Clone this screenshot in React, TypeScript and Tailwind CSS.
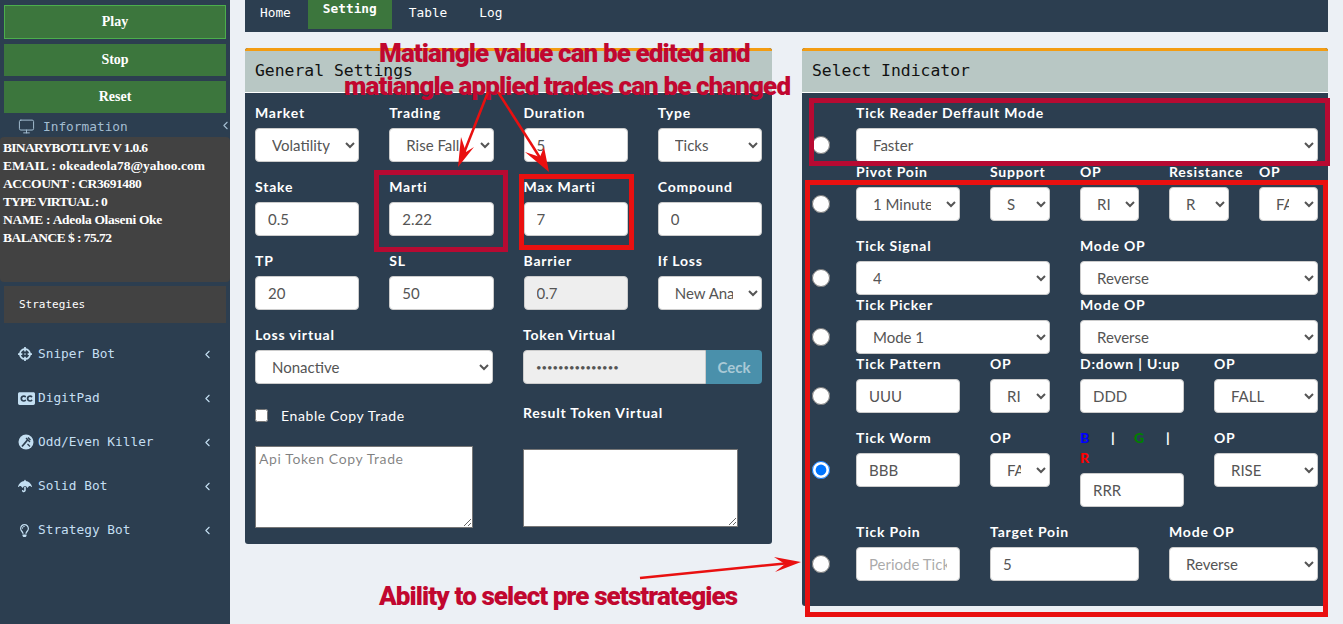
import { Monitor, ChevronLeft } from 'lucide-react'
import { FaCrosshairs, FaClosedCaptioning, FaUmbrella, FaRegLightbulb } from 'react-icons/fa'

const control = 'block w-full h-[34px] rounded-[4px] border border-[#ccc] px-[12px] text-[15px] text-[#555] font-["Lato",sans-serif]'
const label = 'block h-[23px] text-[14px] leading-[16px] font-bold text-white tracking-[0.8px] font-["Lato",sans-serif] whitespace-nowrap'

function Field({ title, children }: { title: string; children: React.ReactNode }) {
  return (
    <div>
      <label className={label}>{title}</label>
      {children}
    </div>
  )
}

function Sel({ value, options }: { value: string; options?: string[] }) {
  const opts = options ?? [value]
  return (
    <select className={`${control} bg-white`} defaultValue={value}>
      {opts.map(o => <option key={o}>{o}</option>)}
    </select>
  )
}

function Inp({ value, placeholder, disabled }: { value?: string; placeholder?: string; disabled?: boolean }) {
  return (
    <input
      className={`${control} ${disabled ? 'bg-[#eee]' : 'bg-white'}`}
      defaultValue={value}
      placeholder={placeholder}
      disabled={disabled}
    />
  )
}

function Row({ cols, gap, checked, children }: { cols: string; gap: string; checked?: boolean; children: React.ReactNode }) {
  return (
    <div className={`flex ${gap}`}>
      <div className="w-[44px] shrink-0 pt-[31px]">
        <input type="radio" name="indicator" defaultChecked={checked} className="block w-[18px] h-[18px] m-0 accent-[#0075ff]" />
      </div>
      <div className={`grid flex-1 gap-x-[30px] items-start ${cols}`}>{children}</div>
    </div>
  )
}

// round badge with a diagonal tool, no package has this one
function ToolBadge() {
  return (
    <svg width="16" height="16" viewBox="0 0 16 16">
      <circle cx="8" cy="8" r="7.5" fill="#c4dff2" />
      <path d="M4 12.5 L9.5 6" stroke="#2c3e50" strokeWidth="1.8" />
      <path d="M8 4 L12 8 M10 3.5 L12.5 6" stroke="#2c3e50" strokeWidth="1.4" />
      <path d="M9.5 10 L12 12.5" stroke="#2c3e50" strokeWidth="1.2" />
    </svg>
  )
}

const menu = [
  { name: 'Sniper Bot', icon: <FaCrosshairs size={14} /> },
  { name: 'DigitPad', icon: <FaClosedCaptioning size={17} /> },
  { name: 'Odd/Even Killer', icon: <ToolBadge /> },
  { name: 'Solid Bot', icon: <FaUmbrella size={14} /> },
  { name: 'Strategy Bot', icon: <FaRegLightbulb size={13} /> },
]

function Sidebar() {
  const btn = 'block w-full bg-[#3c763d] text-white font-bold text-[14px] text-center pb-[2px] font-["Liberation_Serif",serif]'
  return (
    <aside className="w-[230px] shrink-0 h-full bg-[#2c3e50] overflow-hidden">
      <div className="px-[4px] pt-[5px]">
        <button className={`${btn} h-[34px] border border-[#4cae4c]`}>Play</button>
        <button className={`${btn} h-[32px] mt-[5px]`}>Stop</button>
        <button className={`${btn} h-[32px] mt-[5px]`}>Reset</button>
      </div>
      <div className="relative h-[24px] flex items-center pt-[3px] pl-[18px] text-[#a3bdd0] font-['DejaVu_Sans_Mono',monospace] text-[12.8px]">
        <Monitor size={17} strokeWidth={1.4} className="mr-[8px]" />
        Information
        <ChevronLeft size={13} className="absolute right-[-2px] top-[6px]" />
      </div>
      <div className="h-[145px] rounded-[4px] bg-[#424242] pl-[3px] pt-[2px] text-white font-bold text-[13.5px] leading-[18px] font-['Liberation_Serif',serif]">
        <div className="tracking-[-0.7px]">BINARYBOT.LIVE V 1.0.6</div>
        <div>EMAIL : okeadeola78@yahoo.com</div>
        <div className="tracking-[-0.4px]">ACCOUNT : CR3691480</div>
        <div className="tracking-[-0.9px]">TYPE VIRTUAL : 0</div>
        <div className="tracking-[-0.3px]">NAME : Adeola Olaseni Oke</div>
        <div className="tracking-[-0.55px]">BALANCE $ : 75.72</div>
      </div>
      <div className="mx-[4px] mt-[4px] h-[37px] bg-[#424242] pl-[15px] pt-[1px] flex items-center text-white text-[11px] font-['DejaVu_Sans_Mono',monospace]">
        Strategies
      </div>
      <nav className="mt-[9px]">
        {menu.map(m => (
          <div key={m.name} className="h-[44px] flex items-center pl-[18px] pr-[16px] text-[#c4dff2] text-[12.8px] font-['DejaVu_Sans_Mono',monospace]">
            <span className="w-[20px] shrink-0 flex">{m.icon}</span>
            <span className="flex-1">{m.name}</span>
            <ChevronLeft size={13} />
          </div>
        ))}
      </nav>
    </aside>
  )
}

function PanelHead({ title }: { title: string }) {
  return (
    <div className="h-[45px] rounded-t-[3px] border-t-[3px] border-b border-t-[#f39c12] border-b-white bg-[#b8c7c4] pl-[10px] pt-[8px] text-[16.4px] text-[#111] font-['DejaVu_Sans_Mono',monospace]">
      {title}
    </div>
  )
}

function GeneralSettings() {
  return (
    <section className="w-[527px] h-[496px] rounded-[3px] bg-[#2c3e50]">
      <PanelHead title="General Settings" />
      <div className="px-[10px] pt-[12px]">
        <div className="grid grid-cols-4 gap-x-[30px] gap-y-[17px]">
          <Field title="Market"><Sel value="Volatility 100 Index" /></Field>
          <Field title="Trading"><Sel value="Rise Fall" /></Field>
          <Field title="Duration"><Inp value="5" /></Field>
          <Field title="Type"><Sel value="Ticks" /></Field>
          <Field title="Stake"><Inp value="0.5" /></Field>
          <Field title="Marti"><Inp value="2.22" /></Field>
          <Field title="Max Marti"><Inp value="7" /></Field>
          <Field title="Compound"><Inp value="0" /></Field>
          <Field title="TP"><Inp value="20" /></Field>
          <Field title="SL"><Inp value="50" /></Field>
          <Field title="Barrier"><Inp value="0.7" disabled /></Field>
          <Field title="If Loss"><Sel value="New Analysis" /></Field>
        </div>
        <div className="mt-[17px] grid grid-cols-[238px_239px] gap-x-[30px]">
          <Field title="Loss virtual"><Sel value="Nonactive" /></Field>
          <Field title="Token Virtual">
            <div className="flex">
              <input
                type="password"
                readOnly
                defaultValue="aaaaaaaaaaaaaaa"
                className="block flex-1 min-w-0 h-[34px] rounded-l-[4px] border border-[#ccc] bg-[#eee] px-[12px] text-[9.5px] text-[#555] font-['Lato',sans-serif]"
              />
              <button className="w-[56px] h-[34px] rounded-r-[4px] bg-[#4a90ab] text-[#a9c9d6] font-bold text-[15px] font-['Lato',sans-serif]">Ceck</button>
            </div>
          </Field>
        </div>
        <div className="mt-[17px] grid grid-cols-[238px_239px] gap-x-[30px]">
          <div>
            <div className="h-[28px] flex items-center">
              <input type="checkbox" className="block w-[13px] h-[13px] m-0" />
              <span className="ml-[13px] text-[14px] tracking-[0.6px] text-white font-['Lato',sans-serif]">Enable Copy Trade</span>
            </div>
            <textarea
              placeholder="Api Token Copy Trade"
              className="block mt-[17px] w-[218px] h-[82px] bg-white border border-[#767676] px-[3px] py-[1px] text-[14px] tracking-[0.6px] font-['Lato',sans-serif]"
            />
          </div>
          <div>
            <label className={`${label} pt-[4px] h-[24px]`}>Result Token Virtual</label>
            <textarea className="block mt-[24px] w-[215px] h-[78px] bg-white border border-[#767676]" />
          </div>
        </div>
      </div>
    </section>
  )
}

function SelectIndicator() {
  return (
    <section className="w-[526px] h-[558px] rounded-[3px] bg-[#2c3e50]">
      <PanelHead title="Select Indicator" />
      <div className="px-[10px] pt-[12px]">
        <Row cols="grid-cols-1" gap="mb-[2px]">
          <Field title="Tick Reader Deffault Mode"><Sel value="Faster" /></Field>
        </Row>
        <Row cols="grid-cols-[104px_60px_59px_60px_59px]" gap="mb-[17px]">
          <Field title="Pivot Poin"><Sel value="1 Minute" /></Field>
          <Field title="Support"><Sel value="S" /></Field>
          <Field title="OP"><Sel value="RISE" /></Field>
          <Field title="Resistance"><Sel value="R" /></Field>
          <Field title="OP"><Sel value="FALL" /></Field>
        </Row>
        <Row cols="grid-cols-[194px_238px]" gap="mb-[2px]">
          <Field title="Tick Signal"><Sel value="4" /></Field>
          <Field title="Mode OP"><Sel value="Reverse" /></Field>
        </Row>
        <Row cols="grid-cols-[194px_238px]" gap="mb-[2px]">
          <Field title="Tick Picker"><Sel value="Mode 1" /></Field>
          <Field title="Mode OP"><Sel value="Reverse" /></Field>
        </Row>
        <Row cols="grid-cols-[104px_60px_104px_104px]" gap="mb-[17px]">
          <Field title="Tick Pattern"><Inp value="UUU" /></Field>
          <Field title="OP"><Sel value="RISE" /></Field>
          <Field title="D:down | U:up"><Inp value="DDD" /></Field>
          <Field title="OP"><Sel value="FALL" /></Field>
        </Row>
        <Row cols="grid-cols-[104px_60px_104px_104px]" gap="mb-[17px]" checked>
          <Field title="Tick Worm"><Inp value="BBB" /></Field>
          <Field title="OP"><Sel value="FALL" /></Field>
          <div>
            <div className="h-[43px] flex flex-col text-[14px] leading-[20px] font-black text-white font-['Lato',sans-serif]">
              <div className="flex -mt-[2px]">
                <span className="w-[31px] text-[#0000ff]">B</span>
                <span className="w-[23px]">|</span>
                <span className="w-[32px] text-[#008000]">G</span>
                <span>|</span>
              </div>
              <div className="text-[#ff0000]">R</div>
            </div>
            <Inp value="RRR" />
          </div>
          <Field title="OP"><Sel value="RISE" /></Field>
        </Row>
        <Row cols="grid-cols-[104px_149px_149px]" gap="">
          <Field title="Tick Poin"><Inp placeholder="Periode Tick" /></Field>
          <Field title="Target Poin"><Inp value="5" /></Field>
          <Field title="Mode OP"><Sel value="Reverse" /></Field>
        </Row>
      </div>
    </section>
  )
}

function Annotations() {
  const note = 'absolute whitespace-nowrap font-["Roboto",sans-serif] font-black text-[#c1072f] text-[26px] leading-[30px] tracking-[-0.9px]'
  return (
    <div className="absolute inset-0 pointer-events-none">
      <div className={`${note} left-[379px] top-[38px]`}>Matiangle value can be edited and</div>
      <div className={`${note} left-[344px] top-[71px]`}>matiangle applied trades can be changed</div>
      <div className={`${note} left-[379px] top-[581px]`}>Ability to select pre setstrategies</div>

      <div className="absolute left-[374px] top-[170px] w-[134px] h-[82px] border-[5px] border-[#b70a32]" />
      <div className="absolute left-[519px] top-[174px] w-[115px] h-[76px] border-[5px] border-[#e91010]" />
      <div className="absolute left-[809px] top-[98px] w-[521px] h-[68px] border-[5px] border-[#b70a32]" />
      <div className="absolute left-[805px] top-[180px] w-[523px] h-[437px] border-[5px] border-[#e91010]" />

      <svg width="1343" height="624" className="absolute left-0 top-0">
        <g stroke="#e91010" strokeWidth="2.5" fill="#e91010">
          <line x1="488" y1="92" x2="462" y2="158" />
          <line x1="498" y1="92" x2="544" y2="164" />
          <line x1="640" y1="578" x2="790" y2="563" />
        </g>
        <g fill="#e91010">
          <path d="M458 167 L461 137 L466 152 L474 147 Z" />
          <path d="M549 172 L525 152 L540 157 L544 147 Z" />
          <path d="M801 562 L774 557 L785 564 L775 572 Z" />
        </g>
      </svg>
    </div>
  )
}

export default function App() {
  return (
    <div className="relative flex w-[1343px] h-[624px] overflow-hidden bg-[#ecf0f5]">
      <Sidebar />
      <main className="flex-1 px-[15px]">
        <div className="h-[32px] w-[1083px] bg-[#2c3e50] flex gap-[2px] text-[12.8px] leading-[16px] text-white font-['DejaVu_Sans_Mono',monospace]">
          <a className="px-[15px] pt-[5px]">Home</a>
          <a className="h-[29px] px-[15px] pt-[1px] bg-[#3c763d] font-bold">Setting</a>
          <a className="px-[15px] pt-[5px]">Table</a>
          <a className="px-[15px] pt-[5px]">Log</a>
        </div>
        <div className="mt-[16px] flex items-start gap-[30px]">
          <GeneralSettings />
          <SelectIndicator />
        </div>
      </main>
      <Annotations />
    </div>
  )
}
